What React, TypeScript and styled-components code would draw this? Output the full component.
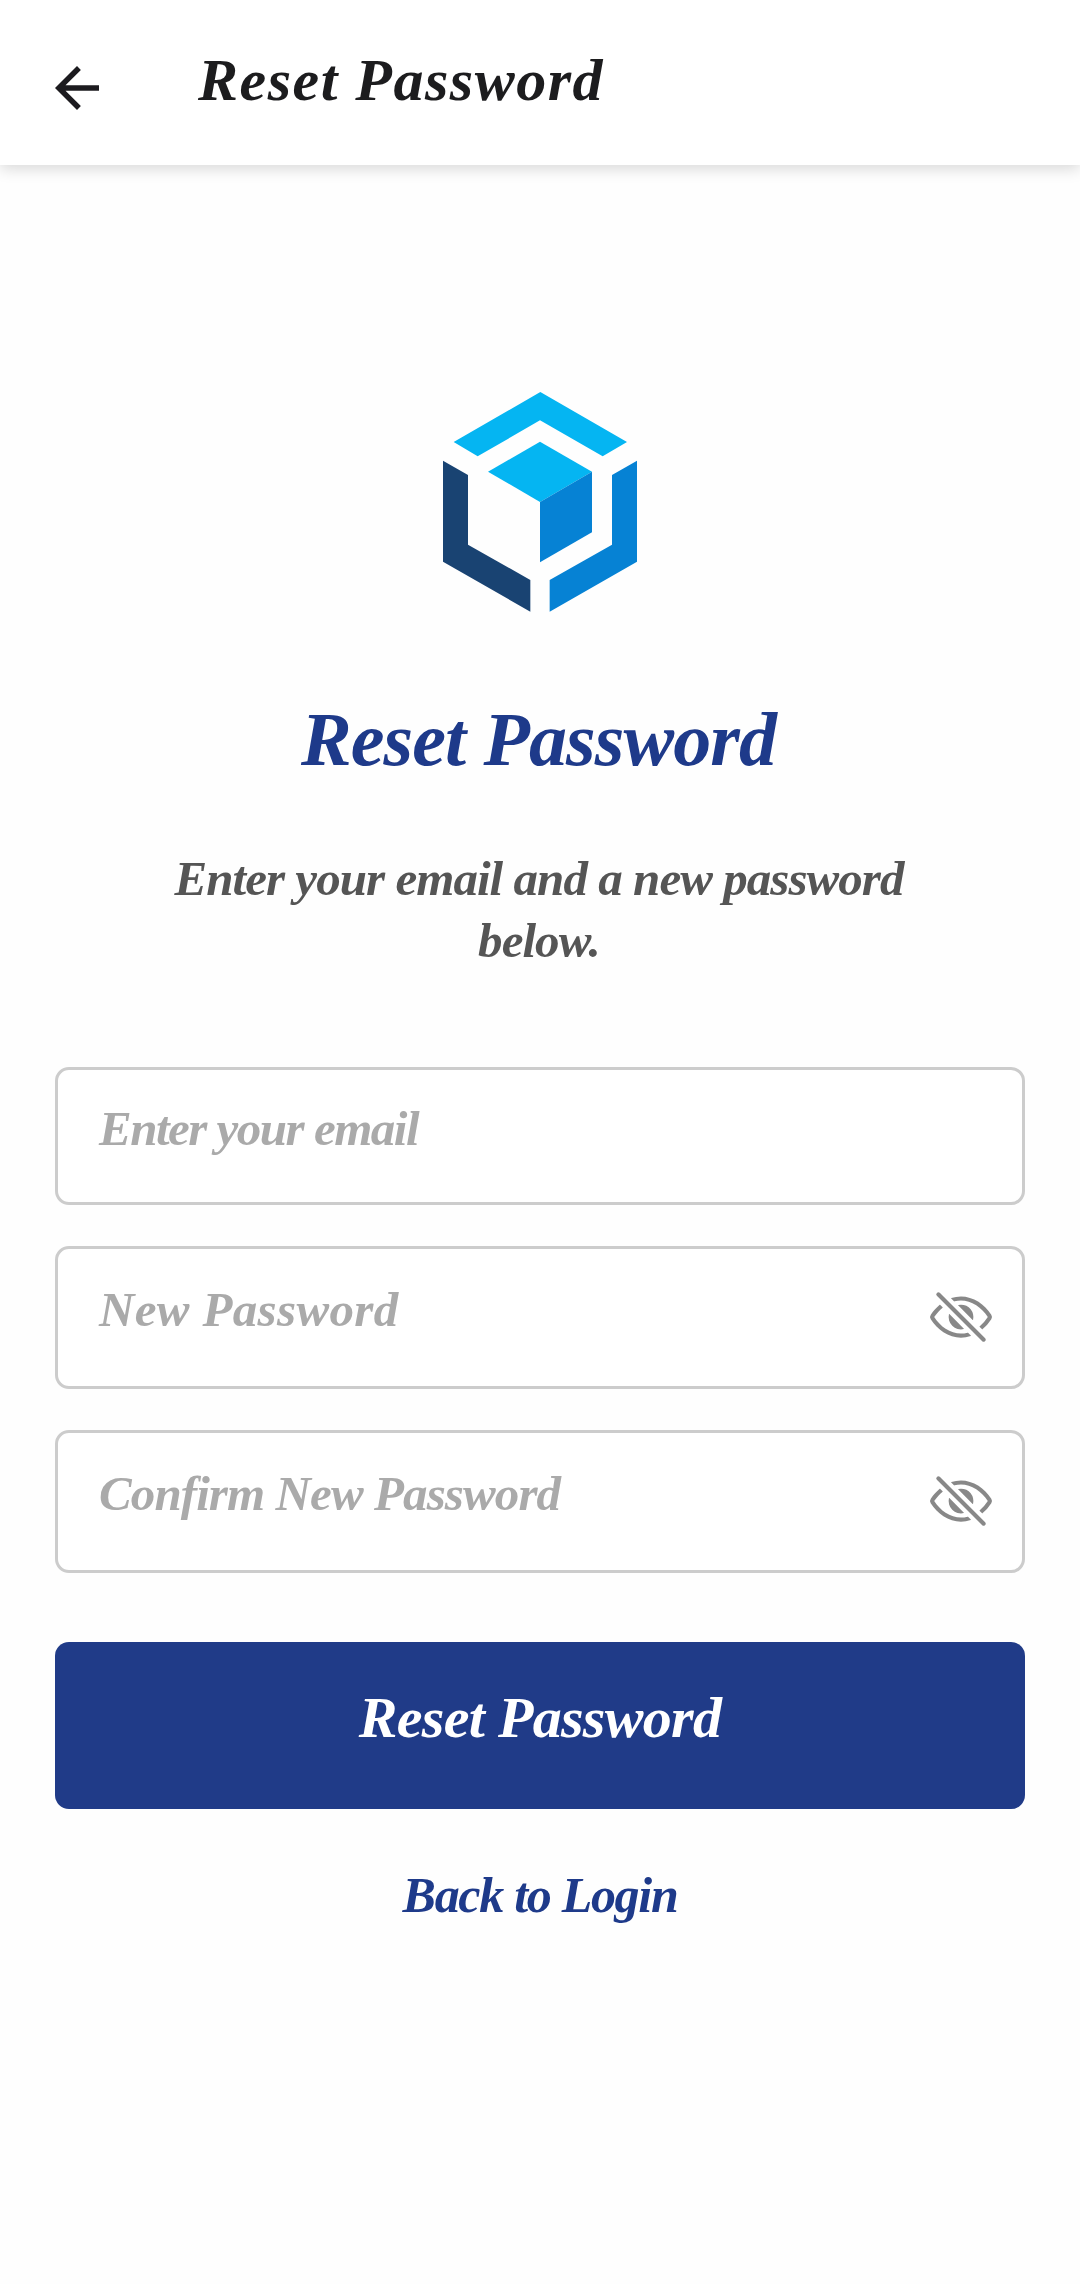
import React from 'react';
import styled, { createGlobalStyle } from 'styled-components';
import { IoEyeOffOutline } from 'react-icons/io5';

const GlobalStyle = createGlobalStyle`
  *, *::before, *::after { box-sizing: border-box; }
  html, body { margin: 0; padding: 0; background: #fefefe; }
`;

const script = `
  font-family: 'Liberation Serif', 'Times New Roman', serif;
  font-style: italic;
  font-weight: 700;
  white-space: nowrap;
`;

const Screen = styled.div`
  width: 1080px;
  height: 2284px;
  display: flex;
  flex-direction: column;
  background: #fefefe;
  overflow: hidden;
`;

const AppBar = styled.header`
  flex: none;
  height: 165px;
  display: flex;
  align-items: flex-start;
  padding: 40px 44px 0;
  background: #ffffff;
  box-shadow: 0 4px 14px rgba(0, 0, 0, 0.15);
`;

const BackButton = styled.button`
  width: 66px;
  height: 66px;
  margin: 15px 88px 0 0;
  padding: 0;
  border: 0;
  background: none;
  color: #1c1b1f;

  svg { display: block; }
`;

const BarTitle = styled.h1`
  ${script}
  margin: 0;
  font-size: 60px;
  line-height: 80px;
  letter-spacing: 1.5px;
  color: #1c1c1e;
`;

const Content = styled.main`
  display: flex;
  flex-direction: column;
  align-items: stretch;
  padding: 205px 55px 0;
`;

const Logo = styled.svg`
  display: block;
  align-self: center;
  width: 240px;
  height: 260px;
`;

const Heading = styled.h2`
  ${script}
  margin: 60px 0 0;
  padding-right: 3px;
  font-size: 76px;
  line-height: 98px;
  letter-spacing: -0.9px;
  text-align: center;
  color: #1e3a8a;
`;

const Lead = styled.p`
  ${script}
  margin: 60px 0 0;
  padding-right: 2px;
  font-size: 49px;
  line-height: 62px;
  letter-spacing: -0.95px;
  text-align: center;
  color: #555555;
`;

const Form = styled.form`
  display: flex;
  flex-direction: column;
  margin-top: 95px;
`;

const Field = styled.label<{ $height: number }>`
  display: flex;
  align-items: flex-start;
  justify-content: space-between;
  height: ${(p) => p.$height}px;
  margin-bottom: 41px;
  padding: 28px 28px 0 41px;
  border: 3px solid #cccccc;
  border-radius: 14px;
  background: #ffffff;
`;

const Placeholder = styled.span<{ $spacing: number; $drop: number }>`
  ${script}
  padding-top: ${(p) => p.$drop}px;
  font-size: 49px;
  line-height: 62px;
  letter-spacing: ${(p) => p.$spacing}px;
  color: #aaaaaa;
`;

const Toggle = styled.span`
  display: flex;
  padding-top: 7px;
  color: #888888;
`;

const Submit = styled.button`
  ${script}
  height: 167px;
  margin-top: 28px;
  padding: 0 0 15px;
  border: 0;
  border-radius: 14px;
  background: #203b88;
  color: #ffffff;
  font-size: 58px;
  line-height: 76px;
  letter-spacing: -0.7px;
  text-align: center;
`;

const LoginLink = styled.a`
  ${script}
  align-self: center;
  margin-top: 55px;
  font-size: 50px;
  line-height: 62px;
  letter-spacing: -1.3px;
  color: #1e3a8a;
`;

type PasswordFieldProps = { label: string; spacing: number };

function PasswordField({ label, spacing }: PasswordFieldProps) {
  return (
    <Field $height={143}>
      <Placeholder $spacing={spacing} $drop={2}>{label}</Placeholder>
      <Toggle>
        <IoEyeOffOutline size={66} />
      </Toggle>
    </Field>
  );
}

export default function App() {
  return (
    <>
      <GlobalStyle />
      <Screen>
        <AppBar>
          <BackButton aria-label="Back" type="button">
            <svg width="66" height="66" viewBox="0 0 24 24" fill="currentColor">
              <path d="M20 11H7.83l5.59-5.59L12 4l-8 8 8 8 1.41-1.41L7.83 13H20v-2z" />
            </svg>
          </BackButton>
          <BarTitle>Reset Password</BarTitle>
        </AppBar>
        <Content>
          <Logo viewBox="0 0 720 780" aria-hidden="true">
            <path fill="#05b5f2" d="M361 66 621 216 548 259 360 151 173 259 101 216z" />
            <path fill="#05b5f2" d="M360 215 516 305 360 396 204 305z" />
            <path fill="#0682d4" d="M516 305V487L360 577V396z" />
            <path fill="#194372" d="M69 272 144 315V524L331 630V725L69 575z" />
            <path fill="#0682d4" d="M651 272V575L389 725V630L576 524V315z" />
          </Logo>
          <Heading>Reset Password</Heading>
          <Lead>
            Enter your email and a new password
            <br />
            below.
          </Lead>
          <Form>
            <Field $height={138}>
              <Placeholder $spacing={-1.5} $drop={0}>Enter your email</Placeholder>
            </Field>
            <PasswordField label="New Password" spacing={0.35} />
            <PasswordField label="Confirm New Password" spacing={-0.9} />
            <Submit type="button">Reset Password</Submit>
          </Form>
          <LoginLink>Back to Login</LoginLink>
        </Content>
      </Screen>
    </>
  );
}
